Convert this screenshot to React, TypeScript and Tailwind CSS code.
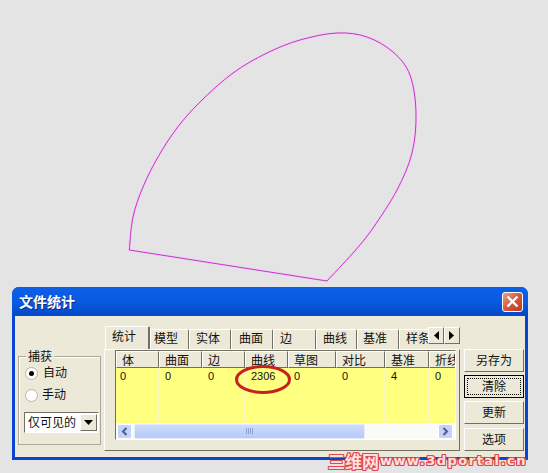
import React from "react";

const cols = [
  { t: "体", w: "w-[43px]", v: "0" },
  { t: "曲面", w: "w-[43px]", v: "0" },
  { t: "边", w: "w-[43px]", v: "0" },
  { t: "曲线", w: "w-[43px]", v: "2306" },
  { t: "草图", w: "w-[48px]", v: "0" },
  { t: "对比", w: "w-[49px]", v: "0" },
  { t: "基准", w: "w-[44px]", v: "4" },
  { t: "折线", w: "w-[43px]", v: "0" },
];

const tabs = [
  { t: "模型", w: "w-[39px]", p: "pl-[3px]" },
  { t: "实体", w: "w-[42px]", p: "pl-[6px]" },
  { t: "曲面", w: "w-[42px]", p: "pl-[7px]" },
  { t: "边", w: "w-[43px]", p: "pl-[6px]" },
  { t: "曲线", w: "w-[41px]", p: "pl-[6px]" },
  { t: "基准", w: "w-[42px]", p: "pl-[5px]" },
];

const raised =
  "border border-t-white border-l-white border-r-[#716f64] border-b-[#716f64] bg-[#ece9d8]";

const pts: [number, number][] = [
  [129.3, 250], [133, 217], [143, 187], [158, 157], [177, 128], [200, 102], [233, 73], [267, 53],
  [300, 40], [337, 33], [367, 37], [393, 52], [410, 75], [416, 113], [412, 153], [397, 190],
  [373, 228], [353, 253], [327, 281],
];

function curvePath() {
  let d = `M${pts[0][0]} ${pts[0][1]}`;
  for (let i = 0; i < pts.length - 1; i++) {
    const p0 = pts[Math.max(i - 1, 0)];
    const p1 = pts[i];
    const p2 = pts[i + 1];
    const p3 = pts[Math.min(i + 2, pts.length - 1)];
    const c1x = p1[0] + (p2[0] - p0[0]) / 6;
    const c1y = p1[1] + (p2[1] - p0[1]) / 6;
    const c2x = p2[0] - (p3[0] - p1[0]) / 6;
    const c2y = p2[1] - (p3[1] - p1[1]) / 6;
    d += ` C${c1x.toFixed(1)} ${c1y.toFixed(1)} ${c2x.toFixed(1)} ${c2y.toFixed(1)} ${p2[0]} ${p2[1]}`;
  }
  return d + " Z";
}

function Btn({ label, focus }: { label: string; focus?: boolean }) {
  return (
    <div
      className={
        focus
          ? "w-[60px] h-[23px] border border-black bg-[#ece9d8] flex items-center justify-center p-[2px]"
          : `w-[60px] h-[23px] ${raised} flex items-center justify-center pb-[2px]`
      }
    >
      {focus ? (
        <div className="w-full h-full border border-dotted border-black flex items-center justify-center pb-[2px]">
          {label}
        </div>
      ) : (
        label
      )}
    </div>
  );
}

function Arrow({ d }: { d: string }) {
  return (
    <svg width="6" height="9" viewBox="0 0 6 9">
      <path d={d} fill="#000" />
    </svg>
  );
}

export default function App() {
  const d = curvePath();
  return (
    <div
      className="relative w-[548px] h-[473px] bg-[#e4e4e4] overflow-hidden pt-[287px] pl-[12px] text-[12px] leading-none text-[#111]"
      style={{ fontFamily: '"Noto Sans CJK SC", sans-serif' }}
    >
      {/* sketch */}
      <svg className="absolute left-0 top-0" width="548" height="287" viewBox="0 0 548 287" fill="none">
        <path d={d} stroke="#f6c4f6" strokeWidth="2.4" opacity="0.6" />
        <path d={d} stroke="#c934cb" strokeWidth="1" />
      </svg>

      {/* window */}
      <div className="relative w-[516px] h-[173px] rounded-t-[7px] bg-[#0a45d0] flex flex-col overflow-hidden">
        <div className="h-[29px] shrink-0 flex items-center justify-between pl-[7px] pr-[5px] bg-gradient-to-b from-[#0b5fe6] via-[#0a5be0] to-[#0348c8]">
          <span className="text-white font-bold text-[14px] pb-[2px] [text-shadow:1px_1px_0_#0a2a80]">文件统计</span>
          <div className="w-[21px] h-[20px] rounded-[3px] border border-white bg-gradient-to-br from-[#e8a080] via-[#d8583a] to-[#b83a20] flex items-center justify-center">
            <svg width="13" height="13" viewBox="0 0 13 13">
              <path d="M1.5 1.5 L11.5 11.5 M11.5 1.5 L1.5 11.5" stroke="#fff" strokeWidth="2.4" />
            </svg>
          </div>
        </div>

        <div className="mx-[3px] h-[141px] bg-[#ece9d8] flex">
          {/* left group */}
          <div className="relative ml-[3px] mt-[40px] w-[83px] h-[89px] border border-[#aca899] shadow-[inset_1px_1px_0_#fff]">
            <span className="absolute left-[7px] top-[-7px] px-[2px] bg-[#ece9d8]">捕获</span>
            <div className="flex items-center gap-[5px] pl-[6px] pt-[10px] h-[22px]">
              <span className="w-[13px] h-[13px] rounded-full bg-white border border-[#b8b4a4] flex items-center justify-center">
                <span className="w-[5px] h-[5px] rounded-full bg-black" />
              </span>
              <span className="pb-[2px]">自动</span>
            </div>
            <div className="flex items-center gap-[4px] pl-[6px] pt-[10px] h-[22px]">
              <span className="w-[13px] h-[13px] rounded-full bg-white border border-[#b8b4a4]" />
              <span className="pb-[2px]">手动</span>
            </div>
            <div className="mt-[11px] ml-[5px] w-[75px] h-[21px] bg-white border border-t-[#716f64] border-l-[#716f64] border-r-white border-b-white flex items-center justify-between pl-[3px] pr-[1px]">
              <span className="whitespace-nowrap pb-[2px]">仅可见的</span>
              <div className={`w-[17px] h-[17px] ${raised} flex items-center justify-center`}>
                <svg width="9" height="5" viewBox="0 0 9 5">
                  <path d="M0 0 H9 L4.5 5 Z" fill="#000" />
                </svg>
              </div>
            </div>
          </div>

          {/* tabs + panel */}
          <div className="relative ml-[3px] mt-[10px] w-[356px]">
            <div className="relative h-[23px] flex items-end overflow-hidden z-10 pl-[1px]">
              <div className="w-[45px] h-[23px] bg-[#ece9d8] border-t border-l border-white border-r-2 border-r-[#716f64] rounded-t-[2px] flex items-center pl-[6px] pb-[4px]">
                统计
              </div>
              {tabs.map((x) => (
                <div
                  key={x.t}
                  className={`${x.w} ${x.p} h-[20px] shrink-0 border-t border-l border-white border-r border-r-[#716f64] rounded-t-[2px] flex items-center pb-[3px]`}
                >
                  {x.t}
                </div>
              ))}
              <div className="w-[29px] h-[20px] pl-[6px] pb-[3px] shrink-0 border-t border-l border-white whitespace-nowrap flex items-center overflow-hidden">
                样条
              </div>
              <div className="absolute right-[0px] top-[1px] h-[17px] flex bg-[#ece9d8]">
                <div className={`w-[16px] h-[17px] ${raised} flex items-center justify-center`}>
                  <Arrow d="M6 0 V9 L1 4.5 Z" />
                </div>
                <div className={`w-[16px] h-[17px] ${raised} flex items-center justify-center`}>
                  <Arrow d="M0 0 V9 L5 4.5 Z" />
                </div>
              </div>
            </div>

            <div className="w-[356px] h-[102px] border border-t-white border-l-white border-r-[#716f64] border-b-[#716f64] pl-[10px]">
              <div className="w-[341px] h-[90px] border border-t-[#716f64] border-l-[#716f64] border-r-white border-b-white bg-[#ffff80] flex flex-col overflow-hidden">
                <div className="flex h-[17px] shrink-0 bg-[#ece9d8]">
                  {cols.map((c) => (
                    <div
                      key={c.t}
                      className={`${c.w} shrink-0 h-[17px] border-t border-t-white border-l border-l-white border-r border-r-[#716f64] border-b border-b-[#716f64] pl-[5px] flex items-center whitespace-nowrap overflow-hidden`}
                    >
                      {c.t}
                    </div>
                  ))}
                </div>
                <div className="flex flex-col h-[55px] shrink-0">
                  {[16, 14, 14, 11].map((h, r) => (
                    <div key={r} className="flex shrink-0 border-b border-[#f8f8c0] last:border-b-0" style={{ height: h }}>
                      {cols.map((c, i) => (
                        <div
                          key={c.t}
                          className={`${c.w} ${i === 0 ? "pl-[4px]" : "pl-[6px]"} shrink-0 border-r border-[#f8f8c0] pt-[2px] flex items-center`}
                          style={{ fontFamily: '"Liberation Sans", sans-serif', fontSize: 11 }}
                        >
                          {r === 0 ? c.v : ""}
                        </div>
                      ))}
                    </div>
                  ))}
                </div>
                <div className="h-[16px] shrink-0 bg-[#fafaf6] flex items-center pl-[1px] pr-[2px]">
                  <div className="w-[15px] h-[15px] rounded-[2px] bg-[#c3d3fb] border border-white flex items-center justify-center">
                    <svg width="7" height="9" viewBox="0 0 7 9" fill="none">
                      <path d="M5.5 1 L2 4.5 L5.5 8" stroke="#4d6185" strokeWidth="2" />
                    </svg>
                  </div>
                  <div className="ml-[2px] w-[231px] h-[15px] rounded-[2px] bg-gradient-to-b from-[#cddcfc] to-[#b6caf7] border border-[#e4ecfe] flex items-center justify-center gap-[1px]">
                    {[0, 1, 2, 3].map((i) => (
                      <span key={i} className="w-[1px] h-[6px] bg-[#8ba3d8]" />
                    ))}
                  </div>
                  <div className="flex-1" />
                  <div className="w-[15px] h-[15px] rounded-[2px] bg-[#c3d3fb] border border-white flex items-center justify-center">
                    <svg width="7" height="9" viewBox="0 0 7 9" fill="none">
                      <path d="M1.5 1 L5 4.5 L1.5 8" stroke="#4d6185" strokeWidth="2" />
                    </svg>
                  </div>
                </div>
              </div>
            </div>
          </div>

          {/* buttons */}
          <div className="ml-[4px] mt-[33px] flex flex-col gap-[3px]">
            <Btn label="另存为" />
            <Btn label="清除" focus />
            <Btn label="更新" />
            <div className="mt-[1px]">
              <Btn label="选项" />
            </div>
          </div>
        </div>
      </div>

      {/* red marker */}
      <svg className="absolute left-[233px] top-[363px]" width="60" height="33" viewBox="0 0 60 33" fill="none">
        <ellipse cx="30" cy="16.5" rx="26.5" ry="13" stroke="#c8201c" strokeWidth="3" />
      </svg>

      {/* watermark */}
      <div className="absolute left-[328px] top-[451px] h-[18px] flex items-center whitespace-nowrap font-bold text-[#ffe0e0] [text-shadow:1px_0_0_#e04848,-1px_0_0_#e04848,0_1px_0_#e04848,0_-1px_0_#e04848,1px_1px_0_#e04848,-1px_-1px_0_#e04848,1px_-1px_0_#e04848,-1px_1px_0_#e04848]">
        <span className="text-[17px]">三维网</span>
        <span className="text-[13px] tracking-[1.5px] pl-[1px]" style={{ fontFamily: '"DejaVu Sans", sans-serif' }}>www.3dportal.cn</span>
      </div>
    </div>
  );
}
